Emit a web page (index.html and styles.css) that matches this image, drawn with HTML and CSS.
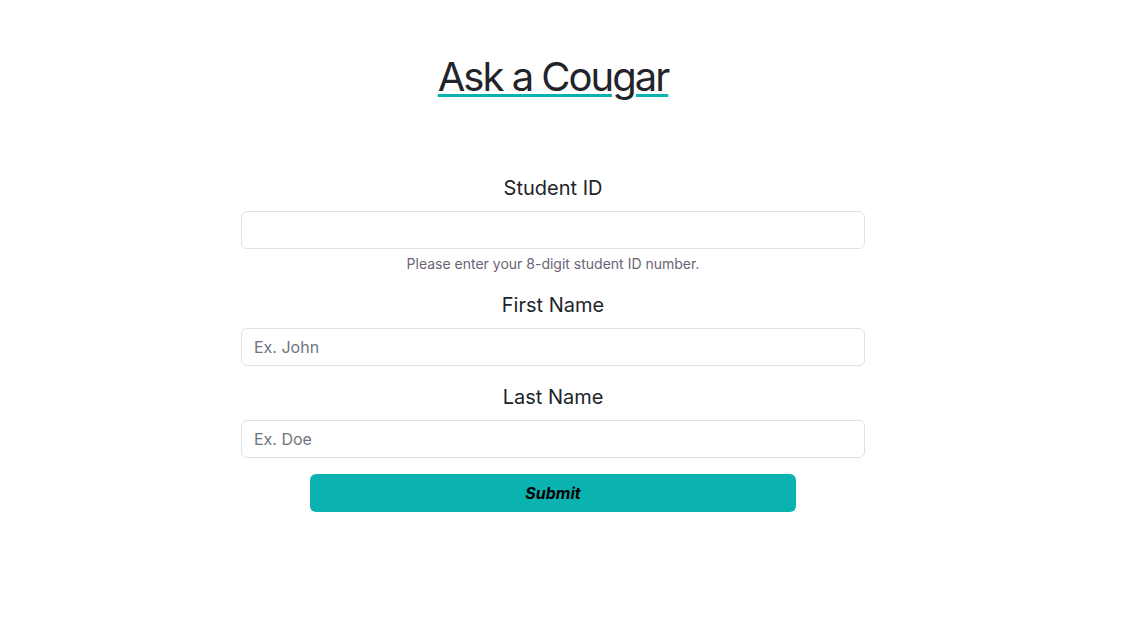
FILE: index.html
```html
<!DOCTYPE html>
<html lang="en">
<head>
  <meta charset="UTF-8">
  <title>Ask a Cougar</title>
  <link rel="stylesheet" href="styles.css">
</head>
<body>

<main class="page">
  <h1 class="title">Ask a Cougar</h1>

  <form class="ask-form">
    <div class="field">
      <label for="student-id">Student ID</label>
      <input type="text" id="student-id">
      <div class="hint">Please enter your 8-digit student ID number.</div>
    </div>
    <div class="field">
      <label for="first-name">First Name</label>
      <input type="text" id="first-name" placeholder="Ex. John">
    </div>
    <div class="field">
      <label for="last-name">Last Name</label>
      <input type="text" id="last-name" placeholder="Ex. Doe">
    </div>
    <button type="submit" class="submit">Submit</button>
  </form>
</main>

</body>
</html>
```

FILE: styles.css
```css
body {
  margin: 0;
  font-family: 'Inter', 'Noto Sans', sans-serif;
  color: #212529;
  background: #fff;
}
.page {
  width: 1106px;
  padding-top: 53px;
}
.title {
  margin: 0;
  text-align: center;
  font-size: 40px;
  font-weight: 400;
  line-height: 48px;
  letter-spacing: -2px;
  text-decoration: underline;
  text-decoration-color: #0ab2b0;
  text-decoration-thickness: 3px;
  text-underline-offset: 3px;
}
.ask-form {
  width: 624px;
  margin: 72px auto 0;
  display: flex;
  flex-direction: column;
  align-items: center;
}
.field {
  width: 100%;
  display: flex;
  flex-direction: column;
  align-items: center;
  margin-bottom: 16px;
}
.field label {
  font-size: 20px;
  line-height: 30px;
  margin-bottom: 8px;
}
.field input {
  box-sizing: border-box;
  width: 100%;
  height: 38px;
  padding: 0 12px;
  border: 1px solid #dee2e6;
  border-radius: 6px;
  font-family: inherit;
  font-size: 16px;
  color: #212529;
}
.field input::placeholder {
  color: #6c757d;
}
.hint {
  margin-top: 4px;
  font-size: 14px;
  line-height: 21px;
  color: #6c6475;
}
.submit {
  width: 486px;
  height: 38px;
  border: none;
  border-radius: 6px;
  background: #0ab2b0;
  color: #000;
  font-family: inherit;
  font-size: 16px;
  font-weight: 700;
  font-style: italic;
  cursor: pointer;
}
```
